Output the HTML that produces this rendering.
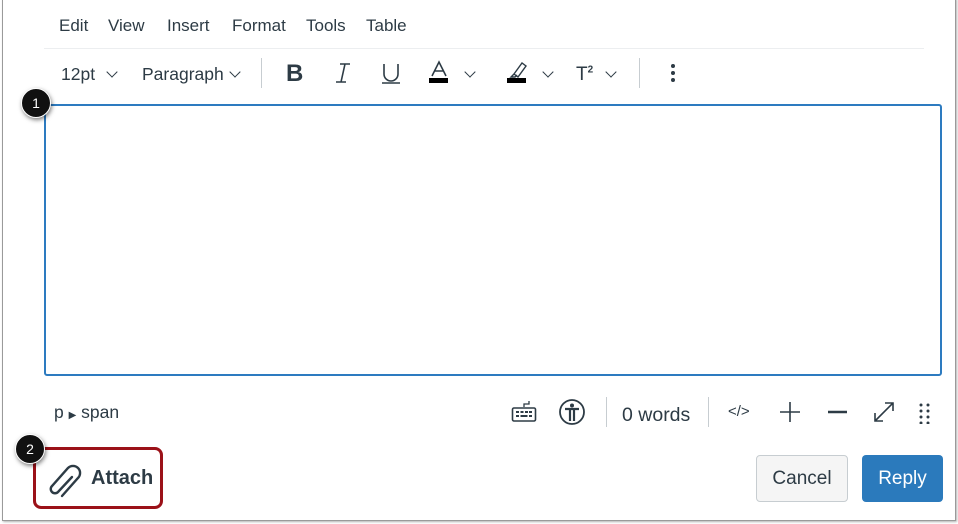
<!DOCTYPE html>
<html><head><style>
*{margin:0;padding:0;box-sizing:border-box}
body{width:958px;height:524px;background:#fff;font-family:"Liberation Sans",sans-serif;color:#2d3b45;position:relative;overflow:hidden}
.frame{position:absolute;left:2px;top:-2px;width:954px;height:523px;border:1px solid #9a9a9a;box-shadow:1px 1px 2px rgba(0,0,0,.3)}
.t{position:absolute;font-size:17px;white-space:nowrap}
.menu{top:16px}
.sep{position:absolute;width:1px;background:#c7cdd1}
.editor{position:absolute;left:44px;top:104px;width:898px;height:272px;border:2px solid #2d7bc0;border-radius:3px}
.badge{position:absolute;width:30px;height:30px;border-radius:50%;background:#111;color:#fff;font-size:14px;text-align:center;line-height:28px;box-shadow:1px 2px 4px rgba(0,0,0,.5);border:1px solid #fff}
.chev{position:absolute;width:8px;height:8px;border-right:1.3px solid #2d3b45;border-bottom:1.3px solid #2d3b45;transform:rotate(45deg)}
.btn{position:absolute;border-radius:4px;font-size:19px;text-align:center}
</style></head><body>
<div class="frame"></div>
<div class="t menu" style="left:59px">Edit</div>
<div class="t menu" style="left:108px">View</div>
<div class="t menu" style="left:167px">Insert</div>
<div class="t menu" style="left:232px">Format</div>
<div class="t menu" style="left:306px">Tools</div>
<div class="t menu" style="left:366px">Table</div>
<div style="position:absolute;left:44px;top:48px;width:880px;height:1px;background:#eceef0"></div>
<div class="t" style="left:61px;top:64px;font-size:17.5px">12pt</div><div class="chev" style="left:108px;top:68px"></div>
<div class="t" style="left:142px;top:64px;font-size:17.5px">Paragraph</div><div class="chev" style="left:231px;top:68px"></div>
<div class="sep" style="left:261px;top:58px;height:30px"></div>
<div class="t" style="left:286px;top:60px;font-size:24px;font-weight:bold">B</div>
<svg style="position:absolute;left:334px;top:62px" width="18" height="22"><path d="M6 2h10M2 20h10M11 2L7 20" fill="none" stroke="#2d3b45" stroke-width="1.6"/></svg>
<svg style="position:absolute;left:380px;top:62px" width="22" height="24"><path d="M4 2v10a7 7 0 0 0 14 0V2" fill="none" stroke="#2d3b45" stroke-width="1.6"/><path d="M2 21h18" stroke="#2d3b45" stroke-width="1.6"/></svg>
<svg style="position:absolute;left:428px;top:60px" width="22" height="26"><path d="M4 16L11 2l7 14M7 11h8" fill="none" stroke="#2d3b45" stroke-width="1.6"/><rect x="1" y="18" width="19" height="5" fill="#000"/></svg>
<div class="chev" style="left:466px;top:68px"></div>
<svg style="position:absolute;left:506px;top:60px" width="22" height="26"><path d="M8 14l-3 3h4l2-2M8 14l8-11 4 3-8 11z" fill="none" stroke="#2d3b45" stroke-width="1.4"/><rect x="1" y="18" width="19" height="5" fill="#000"/></svg>
<div class="chev" style="left:544px;top:68px"></div>
<div class="t" style="left:576px;top:64px;font-size:19px">T<sup style="font-size:10px;font-weight:bold">2</sup></div>
<div class="chev" style="left:607px;top:68px"></div>
<div class="sep" style="left:639px;top:58px;height:30px"></div>
<svg style="position:absolute;left:668px;top:62px" width="10" height="22"><circle cx="5" cy="4" r="2" fill="#2d3b45"/><circle cx="5" cy="11" r="2" fill="#2d3b45"/><circle cx="5" cy="18" r="2" fill="#2d3b45"/></svg>
<div class="editor"></div>
<div class="badge" style="left:21px;top:88px">1</div>
<div class="t" style="left:54px;top:402px;font-size:17.5px">p <span style="font-size:10px">▶</span> span</div>
<svg style="position:absolute;left:511px;top:399px" width="26" height="26"><path d="M13 8V5h5V2" fill="none" stroke="#2d3b45" stroke-width="1.3"/><rect x="1.5" y="9" width="23" height="13" rx="1.5" fill="none" stroke="#2d3b45" stroke-width="1.6"/><g fill="#2d3b45"><rect x="5" y="12" width="3" height="2"/><rect x="9.5" y="12" width="3" height="2"/><rect x="14" y="12" width="3" height="2"/><rect x="18" y="12" width="3" height="2"/><rect x="5" y="16" width="3" height="2"/><rect x="9.5" y="16" width="7" height="2"/><rect x="18" y="16" width="3" height="2"/></g></svg>
<svg style="position:absolute;left:558px;top:398px" width="28" height="28"><circle cx="14" cy="14" r="12" fill="none" stroke="#2d3b45" stroke-width="1.8"/><circle cx="14" cy="7.5" r="2" fill="#2d3b45"/><path d="M7 11h14M12 11v12M16 11v12" stroke="#2d3b45" stroke-width="2.2"/></svg>
<div class="sep" style="left:606px;top:397px;height:30px"></div>
<div class="t" style="left:622px;top:404px;font-size:19.5px">0 words</div>
<div class="sep" style="left:708px;top:397px;height:30px"></div>
<div class="t" style="left:728px;top:403px;font-size:15px">&lt;/&gt;</div>
<svg style="position:absolute;left:778px;top:400px" width="24" height="24"><path d="M12 2v20M2 12h20" stroke="#2d3b45" stroke-width="1.6"/></svg>
<svg style="position:absolute;left:826px;top:400px" width="24" height="24"><path d="M2 12h19" stroke="#2d3b45" stroke-width="2.6"/></svg>
<svg style="position:absolute;left:872px;top:400px" width="24" height="24"><path d="M3 21L21 3M13 3h8v8M3 13v8h8" fill="none" stroke="#2d3b45" stroke-width="1.6"/></svg>
<svg style="position:absolute;left:918px;top:402px" width="14" height="22" fill="#2d3b45"><circle cx="3" cy="3" r="1.5"/><circle cx="10" cy="3" r="1.5"/><circle cx="3" cy="9" r="1.5"/><circle cx="10" cy="9" r="1.5"/><circle cx="3" cy="15" r="1.5"/><circle cx="10" cy="15" r="1.5"/><circle cx="3" cy="21" r="1.5"/><circle cx="10" cy="21" r="1.5"/></svg>
<div style="position:absolute;left:33px;top:447px;width:130px;height:62px;border:3px solid #9b1118;border-radius:8px"></div>
<svg style="position:absolute;left:42px;top:458px" width="42" height="42"><path d="M20 38L36 20a7 7 0 0 0-10-10L10 28a4 4 0 0 0 6 6L30 19" fill="none" stroke="#2d3b45" stroke-width="2.4" stroke-linecap="round"/></svg>
<div class="t" style="left:91px;top:467px;font-size:20px;font-weight:bold">Attach</div>
<div class="badge" style="left:15px;top:434px">2</div>
<div class="btn" style="left:756px;top:455px;width:92px;height:47px;background:#f5f5f5;border:1px solid #c7cdd1;line-height:45px">Cancel</div>
<div class="btn" style="left:862px;top:455px;width:81px;height:47px;background:#2b7abc;color:#fff;line-height:47px">Reply</div>
</body></html>
